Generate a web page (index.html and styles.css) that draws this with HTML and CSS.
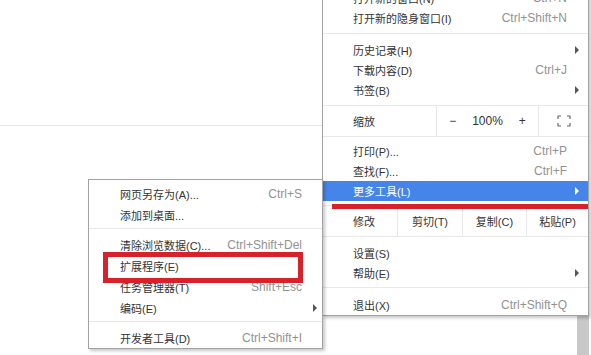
FILE: index.html
```html
<!DOCTYPE html>
<html lang="zh-CN">

<head>
    <meta charset="UTF-8">
    <title>更多工具 - 扩展程序</title>
    <link rel="stylesheet" href="styles.css">
</head>

<body>
    <div class="page">
        <div class="content">
            <div class="toolbar"></div>
        </div>
        <div class="scrollbar"></div>
    </div>

    <!-- Main browser menu -->
    <div class="menu main-menu">
        <div class="menu-item"><span>打开新的窗口(N)</span><span class="key">Ctrl+N</span><span></span></div>
        <div class="menu-item"><span>打开新的隐身窗口(I)</span><span class="key">Ctrl+Shift+N</span><span></span></div>
        <div class="sep"></div>
        <div class="menu-item"><span>历史记录(H)</span><span></span><span class="arrow"></span></div>
        <div class="menu-item"><span>下载内容(D)</span><span class="key">Ctrl+J</span><span></span></div>
        <div class="menu-item"><span>书签(B)</span><span></span><span class="arrow"></span></div>

        <div class="tool-row zoom-row">
            <div class="cell label">缩放</div>
            <div class="cell zoom-ctrl"><span>−</span><span class="pct">100%</span><span>+</span></div>
            <div class="cell center">
                <svg width="14" height="12" viewBox="0 0 14 12" fill="none" stroke="#6a6a6a" stroke-width="1.2">
                    <path d="M1 4V1h3M10 1h3v3M13 8v3h-3M4 11H1V8" />
                </svg>
            </div>
        </div>

        <div class="menu-item first-after-row"><span>打印(P)...</span><span class="key">Ctrl+P</span><span></span></div>
        <div class="menu-item"><span>查找(F)...</span><span class="key">Ctrl+F</span><span></span></div>
        <div class="menu-item active"><span>更多工具(L)</span><span></span><span class="arrow"></span></div>

        <div class="tool-row edit-row">
            <div class="cell label">修改</div>
            <div class="cell center">剪切(T)</div>
            <div class="cell center">复制(C)</div>
            <div class="cell center">粘贴(P)</div>
        </div>

        <div class="menu-item first-after-row2"><span>设置(S)</span><span></span><span></span></div>
        <div class="menu-item"><span>帮助(E)</span><span></span><span class="arrow"></span></div>
        <div class="sep sep-low"></div>
        <div class="menu-item"><span>退出(X)</span><span class="key">Ctrl+Shift+Q</span><span></span></div>
    </div>

    <!-- More tools submenu -->
    <div class="menu sub-menu">
        <div class="menu-item"><span>网页另存为(A)...</span><span class="key">Ctrl+S</span><span></span></div>
        <div class="menu-item"><span>添加到桌面...</span><span></span><span></span></div>
        <div class="sep sep-sub"></div>
        <div class="menu-item"><span>清除浏览数据(C)...</span><span class="key">Ctrl+Shift+Del</span><span></span></div>
        <div class="menu-item"><span>扩展程序(E)</span><span></span><span></span></div>
        <div class="menu-item"><span>任务管理器(T)</span><span class="key">Shift+Esc</span><span></span></div>
        <div class="menu-item"><span>编码(E)</span><span></span><span class="arrow"></span></div>
        <div class="sep sep-sub"></div>
        <div class="menu-item"><span>开发者工具(D)</span><span class="key">Ctrl+Shift+I</span><span></span></div>
    </div>

    <!-- annotation marks -->
    <div class="mark-line"></div>
    <div class="mark-box"></div>
</body>
</html>
```

FILE: styles.css
```css
* {
    margin: 0;
    padding: 0;
    box-sizing: border-box;
}

body {
    width: 591px;
    height: 355px;
    overflow: hidden;
    position: relative;
    background-color: #ffffff;
    font-family: "Liberation Sans", "Noto Sans CJK SC", sans-serif;
}

.page {
    display: flex;
    height: 100%;
}

.content {
    flex: 1;
}

.toolbar {
    height: 126px;
    border-bottom: 1px solid #e4e4e4;
}

.scrollbar {
    width: 12px;
    margin-right: 2px;
    background-color: #c8c8c8;
}

/* menus */
.menu {
    position: absolute;
    background-color: #ffffff;
    border: 1px solid #a3a3a3;
    box-shadow: 2px 2px 3px rgba(0, 0, 0, 0.22);
    font-size: 11px;
    color: #333333;
}

.main-menu {
    left: 322px;
    top: -16px;
    width: 267px;
    padding-top: 3px;
}

.sub-menu {
    left: 88px;
    top: 179px;
    width: 235px;
    padding-top: 3px;
}

.menu-item {
    display: grid;
    grid-template-columns: 1fr auto 21px;
    align-items: center;
    height: 20px;
    padding-left: 30px;
    white-space: nowrap;
}

.sub-menu .menu-item {
    height: 21px;
    padding-left: 31px;
    grid-template-columns: 1fr auto 20px;
}

.menu-item .key {
    font-size: 12px;
    color: #929292;
}

.arrow {
    width: 0;
    height: 0;
    margin-left: 8px;
    border-left: 4px solid #555555;
    border-top: 4px solid transparent;
    border-bottom: 4px solid transparent;
}

.sub-menu .arrow {
    margin-left: 11px;
}

.menu-item.active {
    background-color: #4585ea;
    color: #ffffff;
}

.menu-item.active .arrow {
    border-left-color: #ffffff;
}

.sep {
    height: 1px;
    background-color: #e8e8e8;
    margin: 5px 0 6px;
}

.sep-low {
    margin: 4px 0 7px;
}

.sep-sub {
    margin: 3px 0 5px;
}

/* zoom / edit rows */
.tool-row {
    display: grid;
    height: 32px;
    border-top: 1px solid #e8e8e8;
    border-bottom: 1px solid #e8e8e8;
}

.zoom-row {
    margin-top: 5px;
    grid-template-columns: 113px 102px 1fr;
}

.edit-row {
    margin-top: 4px;
    grid-template-columns: 74px 65px 64px 1fr;
}

.cell {
    display: flex;
    align-items: center;
    border-left: 1px solid #e8e8e8;
}

.cell.label {
    border-left: none;
    padding-left: 30px;
}

.cell.center {
    justify-content: center;
}

.zoom-ctrl {
    justify-content: center;
    gap: 16px;
    font-size: 12px;
}

.first-after-row {
    margin-top: 4px;
}

.first-after-row2 {
    margin-top: 6px;
}

/* red annotation marks */
.mark-line {
    position: absolute;
    left: 332px;
    top: 204px;
    width: 256px;
    height: 5px;
    background-color: #d8222b;
}

.mark-box {
    position: absolute;
    left: 103px;
    top: 252px;
    width: 200px;
    height: 31px;
    border: 5px solid #d8222b;
}
```
